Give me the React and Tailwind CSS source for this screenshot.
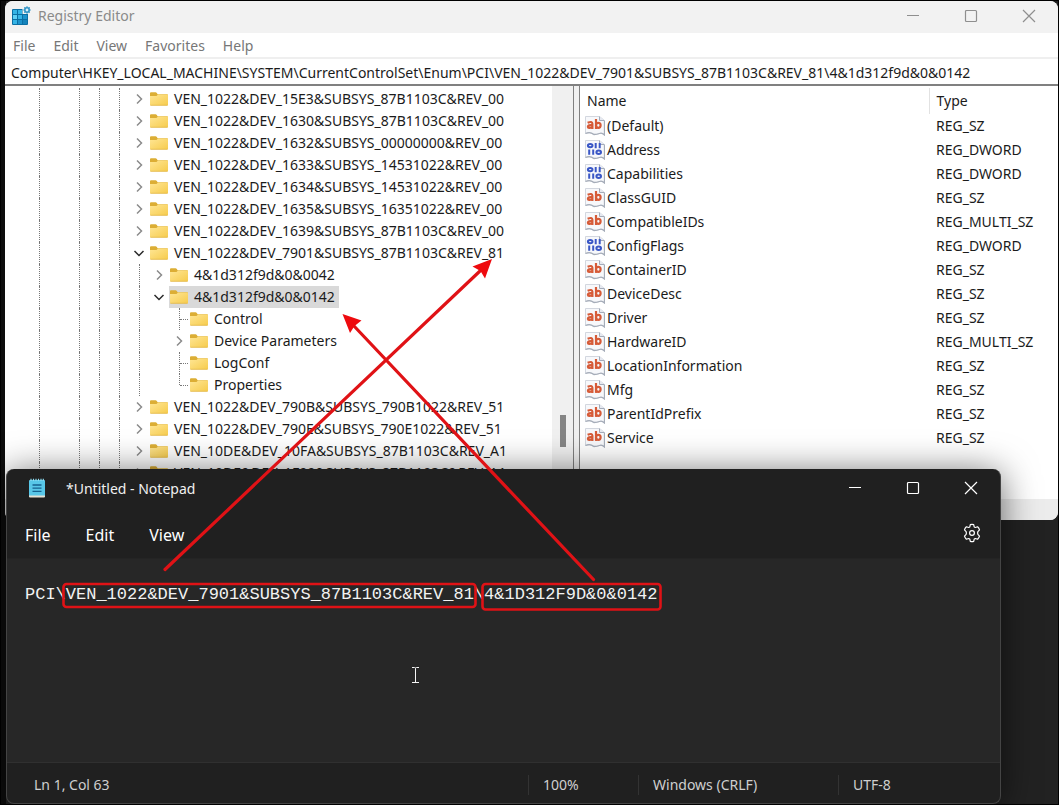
import React from "react";

const tree = [
  { level: 0, name: "VEN_1022&DEV_15E3&SUBSYS_87B1103C&REV_00", state: "closed" },
  { level: 0, name: "VEN_1022&DEV_1630&SUBSYS_87B1103C&REV_00", state: "closed" },
  { level: 0, name: "VEN_1022&DEV_1632&SUBSYS_00000000&REV_00", state: "closed" },
  { level: 0, name: "VEN_1022&DEV_1633&SUBSYS_14531022&REV_00", state: "closed" },
  { level: 0, name: "VEN_1022&DEV_1634&SUBSYS_14531022&REV_00", state: "closed" },
  { level: 0, name: "VEN_1022&DEV_1635&SUBSYS_16351022&REV_00", state: "closed" },
  { level: 0, name: "VEN_1022&DEV_1639&SUBSYS_87B1103C&REV_00", state: "closed" },
  { level: 0, name: "VEN_1022&DEV_7901&SUBSYS_87B1103C&REV_81", state: "open" },
  { level: 1, name: "4&1d312f9d&0&0042", state: "closed" },
  { level: 1, name: "4&1d312f9d&0&0142", state: "open", selected: true },
  { level: 2, name: "Control", state: "leaf" },
  { level: 2, name: "Device Parameters", state: "closed" },
  { level: 2, name: "LogConf", state: "leaf" },
  { level: 2, name: "Properties", state: "last" },
  { level: 0, name: "VEN_1022&DEV_790B&SUBSYS_790B1022&REV_51", state: "closed" },
  { level: 0, name: "VEN_1022&DEV_790E&SUBSYS_790E1022&REV_51", state: "closed" },
  { level: 0, name: "VEN_10DE&DEV_10FA&SUBSYS_87B1103C&REV_A1", state: "closed" },
  { level: 0, name: "VEN_10DE&DEV_1F99&SUBSYS_87B1103C&REV_A1", state: "closed" },
];

const values = [
  ["(Default)", "REG_SZ"],
  ["Address", "REG_DWORD"],
  ["Capabilities", "REG_DWORD"],
  ["ClassGUID", "REG_SZ"],
  ["CompatibleIDs", "REG_MULTI_SZ"],
  ["ConfigFlags", "REG_DWORD"],
  ["ContainerID", "REG_SZ"],
  ["DeviceDesc", "REG_SZ"],
  ["Driver", "REG_SZ"],
  ["HardwareID", "REG_MULTI_SZ"],
  ["LocationInformation", "REG_SZ"],
  ["Mfg", "REG_SZ"],
  ["ParentIdPrefix", "REG_SZ"],
  ["Service", "REG_SZ"],
];

function RegistryIcon() {
  return (
    <svg width="20" height="20" viewBox="0 0 20 20" aria-hidden="true">
      <rect x="1" y="3" width="16" height="16" rx="1" fill="#0b6fa4" />
      <g fill="#35b4e6">
        <rect x="2" y="4" width="4" height="4" />
        <rect x="7" y="4" width="4" height="4" />
        <rect x="2" y="9" width="4" height="4" fill="#5fd0f5" />
        <rect x="7" y="9" width="4" height="4" />
        <rect x="12" y="9" width="4" height="4" fill="#1e93cc" />
        <rect x="2" y="14" width="4" height="4" />
        <rect x="7" y="14" width="4" height="4" fill="#1e93cc" />
        <rect x="12" y="14" width="4" height="4" fill="#1583bb" />
      </g>
      <path d="M11.5 0H20V8H11.5Z" fill="#f2f2f2" />
      <circle cx="16" cy="4" r="2.2" fill="#d9f0fb" stroke="#2f93c4" strokeWidth="1.6" />
      <path d="M16 .2v1.4M16 6.4v1.4M12.2 4h1.4M18.4 4h1.4M13.3 1.3l1 1M17.7 5.7l1 1M18.7 1.3l-1 1M14.3 5.7l-1 1" stroke="#2f93c4" strokeWidth="1.2" />
    </svg>
  );
}

function Folder() {
  return (
    <svg className="shrink-0" width="18" height="14" viewBox="0 0 18 14" aria-hidden="true">
      <defs>
        <linearGradient id="folder" x1="0" y1="0" x2="1" y2="1">
          <stop offset="0" stopColor="#ffe694" />
          <stop offset="1" stopColor="#f6cb4c" />
        </linearGradient>
      </defs>
      <path d="M0 1.2Q0 .3 1 .3H5.6Q6.3 .3 6.8 1L7.6 2.2H17Q18 2.2 18 3V8H0Z" fill="#dcae35" />
      <path d="M0 4H6.5L8 2.6H17.2Q18 2.6 18 3.4V12.8Q18 13.6 17.2 13.6H.8Q0 13.6 0 12.8Z" fill="url(#folder)" />
      <path d="M.4 13.3H17.6" stroke="#dfb144" strokeWidth=".7" />
    </svg>
  );
}

function ValueIcon({ binary }) {
  return (
    <svg className="shrink-0" width="20" height="20" viewBox="0 0 20 20" aria-hidden="true">
      <path
        d="M.5 .5H14.5L19.5 4.5V19Q17 16.5 14.5 17.5T9 18.5Q5 15.5 .5 17.5Z"
        fill="#f7f8fb"
        stroke="#d3d7df"
      />
      <path d="M14.5 .5V4.5H19.5" fill="#e6e9f0" stroke="#a3abb9" />
      <path d="M19.5 5V19Q17 16.5 14.5 17.5T9 18.5Q5 15.5 .5 17.5" fill="none" stroke="#a6adb9" strokeWidth="1.3" />
      {binary ? (
        <g fill="none" stroke="#3a57c6" strokeWidth="2">
          <ellipse cx="5.2" cy="5.6" rx="2.3" ry="1.7" />
          <path d="M10.700 3V8.200M14.700 3V8.200" />
          <path d="M4.200 9.600V14.800M8.200 9.600V14.800" />
          <ellipse cx="13.700" cy="12.200" rx="2.300" ry="1.700" />
        </g>
      ) : (
        <g fill="none" stroke="#d65b38" strokeWidth="2.200">
          <path d="M2.600 6.800Q7.400 4.800 7.400 7.700V12.900M7.400 9.200Q2.900 8.800 2.900 10.800Q3.100 12.800 7.400 11.200" />
          <path d="M11 3V12.900" />
          <ellipse cx="13.300" cy="9.300" rx="2.300" ry="2.500" />
        </g>
      )}
    </svg>
  );
}

function Guide() {
  return (
    <span className="flex h-full w-5 shrink-0 justify-center">
      <span className="h-full border-l border-dotted border-[#777]" />
    </span>
  );
}

function Expander({ state, name }) {
  if (state === "leaf" || state === "last") {
    return (
      <span className="flex h-full w-5 shrink-0 pl-[10px]">
        <span className={`w-0 border-l border-dotted border-[#777] ${state === "last" ? "h-[11px]" : "h-full"}`} />
        <span className="mt-[11px] h-0 w-2 border-t border-dotted border-[#777]" />
      </span>
    );
  }
  return (
    <button
      type="button"
      aria-label={(state === "open" ? "Collapse " : "Expand ") + name}
      className="flex h-full w-5 shrink-0 items-center justify-center"
    >
      {state === "open" ? (
        <svg width="12" height="12" viewBox="0 0 12 12" fill="none" stroke="#2b2b2b" strokeWidth="1.5">
          <path d="M1.5 4L6 8.5L10.5 4" />
        </svg>
      ) : (
        <svg width="12" height="12" viewBox="0 0 12 12" fill="none" stroke="#8b8b8b" strokeWidth="1.5">
          <path d="M4 1.5L8.5 6L4 10.5" />
        </svg>
      )}
    </button>
  );
}

function TreeRow({ item }) {
  return (
    <li className="flex h-[22px] items-center pl-6">
      <Guide />
      <span className="w-5 shrink-0" />
      <Guide />
      <Guide />
      <Guide />
      {item.level > 0 && <Guide />}
      {item.level > 1 && <span className="w-5 shrink-0" />}
      <Expander state={item.state} name={item.name} />
      <span className={`flex h-full items-center gap-[6px] pr-1 pl-px whitespace-nowrap ${item.selected ? "bg-[#d9d9d9]" : ""}`}>
        <Folder />
        {item.name}
      </span>
    </li>
  );
}

function WindowButtons({ className }) {
  return (
    <div className={className}>
      <button type="button" aria-label="Minimize" className="flex w-[58px] justify-center">
        <svg width="14" height="14" viewBox="0 0 14 14" fill="none" stroke="currentColor" strokeWidth="1.2">
          <path d="M1 6.5H13" />
        </svg>
      </button>
      <button type="button" aria-label="Maximize" className="flex w-[58px] justify-center">
        <svg width="14" height="14" viewBox="0 0 14 14" fill="none" stroke="currentColor" strokeWidth="1.2">
          <rect x="1.5" y="1.5" width="11" height="11" rx="1" />
        </svg>
      </button>
      <button type="button" aria-label="Close" className="flex w-[58px] justify-center">
        <svg width="14" height="14" viewBox="0 0 14 14" fill="none" stroke="currentColor" strokeWidth="1.2">
          <path d="M1 1L13 13M13 1L1 13" />
        </svg>
      </button>
    </div>
  );
}

function RegistryEditor() {
  return (
    <section className="absolute top-px right-px left-[5px] overflow-hidden rounded-lg bg-white text-sm text-[#1b1b1b]">
      <header className="flex h-8 items-center bg-[#f2f2f2] pb-[3px] pl-[6px] text-[#8a8a8a]">
        <RegistryIcon />
        <h1 className="flex-1 pl-[7px]">Registry Editor</h1>
        <WindowButtons className="flex text-[#8f8f8f]" />
      </header>
      <nav className="flex h-6 items-center gap-[18px] pt-[2px] pl-2 text-[#777]">
        {["File", "Edit", "View", "Favorites", "Help"].map((m) => (
          <button type="button" key={m}>{m}</button>
        ))}
      </nav>
      <div className="border-y-2 border-t-[#efefef] border-b-[#808080]">
        <input
          aria-label="Address"
          defaultValue="Computer\HKEY_LOCAL_MACHINE\SYSTEM\CurrentControlSet\Enum\PCI\VEN_1022&DEV_7901&SUBSYS_87B1103C&REV_81\4&1d312f9d&0&0142"
          className="block h-[25px] w-full bg-white pt-px pl-[6px] outline-none"
        />
      </div>
      <div className="flex">
        <div className="flex w-[569px] shrink-0 border-r border-[#808080]">
          <ul className="min-w-0 flex-1 overflow-hidden pt-[2px] pb-[15px]">
            {tree.map((item) => (
              <TreeRow key={item.name} item={item} />
            ))}
          </ul>
          <div className="w-[21px] shrink-0 bg-[#f0f0f0] pt-[329px]">
            <div className="mx-auto h-8 w-[6px] bg-[#858585]" />
          </div>
        </div>
        <div className="w-[5px] shrink-0 bg-[#f0f0f0]" />
        <div className="min-w-0 flex-1 border-l border-[#808080] pt-[2px]">
          <table className="w-full table-fixed border-collapse text-left">
            <thead>
              <tr className="h-[26px]">
                <th className="w-[349px] border-r border-[#e2e2e2] pl-[7px] font-normal">Name</th>
                <th className="pl-[7px] font-normal">Type</th>
              </tr>
            </thead>
            <tbody>
              {values.map(([name, type]) => (
                <tr key={name} className="h-6">
                  <td className="p-0 pl-[5px]">
                    <span className="flex items-center gap-[2px]">
                      <ValueIcon binary={type === "REG_DWORD"} />
                      {name}
                    </span>
                  </td>
                  <td className="p-0 pl-[7px]">{type}</td>
                </tr>
              ))}
            </tbody>
          </table>
        </div>
      </div>
      <footer className="h-[21px] bg-[#ececec]" />
    </section>
  );
}

function Gear() {
  return (
    <svg width="20" height="20" viewBox="0 0 20 20" fill="none" stroke="currentColor" strokeWidth="1.2" strokeLinejoin="round">
      <path d="M8.3 1.6Q10 1.1 11.7 1.6L12.2 3.9Q12.6 4.4 13.4 4.5L15.6 3.8Q17 5 17.5 6.8L15.9 8.6Q15.3 10 15.9 11.4L17.5 13.2Q17 15 15.6 16.2L13.4 15.5Q12.6 15.6 12.2 16.1L11.7 18.4Q10 18.9 8.3 18.4L7.8 16.1Q7.4 15.6 6.6 15.5L4.4 16.2Q3 15 2.5 13.2L4.1 11.4Q4.7 10 4.1 8.6L2.5 6.8Q3 5 4.4 3.8L6.6 4.5Q7.4 4.4 7.8 3.9Z" />
      <circle cx="10" cy="10" r="2.4" />
    </svg>
  );
}

function Notepad() {
  return (
    <section className="absolute top-[469px] right-[58px] bottom-px left-[6px] flex flex-col overflow-hidden rounded-lg border border-t-0 border-[#444] bg-[#202020] text-sm text-white shadow-[0_4px_36px_rgba(0,0,0,0.6)]">
      <header className="flex h-9 shrink-0 items-center pt-[2px] pl-[21px]">
        <svg width="18" height="20" viewBox="0 0 18 20" aria-hidden="true">
          <rect x="1" y="2" width="16" height="17" rx="1" fill="#58c7e8" />
          <path d="M1 17.4H17V18.4Q17 19.4 16 19.4H2Q1 19.4 1 18.4Z" fill="#e4e1d3" />
          <path d="M3 .8V3M5.500 .8V3M8 .8V3M10.500 .8V3M13 .8V3M15.300 .8V3" stroke="#8edcf2" strokeWidth="1.2" />
          <path d="M4.500 7H13.500M4.500 10.200H13.500M4.500 13.400H13.500" stroke="#14628f" strokeWidth="1.3" />
        </svg>
        <h2 className="flex-1 pt-px pl-5 text-[#f0f0f0]">*Untitled - Notepad</h2>
        <WindowButtons className="flex" />
      </header>
      <nav className="flex h-[53px] shrink-0 items-center gap-[35px] pt-[6px] pr-[18px] pl-[18px] text-base">
        <button type="button">File</button>
        <button type="button">Edit</button>
        <button type="button">View</button>
        <button type="button" aria-label="Settings" className="ml-auto pb-1">
          <Gear />
        </button>
      </nav>
      <textarea
        aria-label="Document text"
        spellCheck={false}
        defaultValue={"PCI\\VEN_1022&DEV_7901&SUBSYS_87B1103C&REV_81\\4&1D312F9D&0&0142"}
        className="block min-h-0 w-full flex-1 resize-none border-y border-t-[#242424] border-b-[#303030] bg-[#272727] pt-6 pl-[18px] font-['Liberation_Mono',monospace] text-[17px] leading-6 text-[#f2f2f2] outline-none"
      />
      <footer className="flex h-10 shrink-0 items-center pt-1 text-[#cfcfcf]">
        <span className="flex-1 pl-[27px]">Ln 1, Col 63</span>
        <span className="w-[110px] border-l border-[#333] pl-[14px]">100%</span>
        <span className="w-[200px] border-l border-[#333] pl-[14px]">Windows (CRLF)</span>
        <span className="w-[162px] border-l border-[#333] pl-[14px]">UTF-8</span>
      </footer>
    </section>
  );
}

function Annotations() {
  return (
    <svg className="pointer-events-none absolute top-0 left-0" width="700" height="720" viewBox="0 0 700 720" fill="none" aria-hidden="true">
      <g stroke="#e01216" strokeWidth="3.200" strokeLinecap="round">
        <path d="M165 569.500L480 271M593.500 579.500L354 326" />
      </g>
      <g fill="#ee0a0e">
        <path d="M492 259L485 278.500L480.500 271L472.500 266.500Z" />
        <path d="M342.500 314L361.500 320.500L354.500 326L350 333Z" />
      </g>
      <g stroke="#e01216" strokeWidth="2.600">
        <rect x="63.500" y="584" width="412" height="23" rx="3" />
        <rect x="482.500" y="584" width="178" height="25.500" rx="3" />
      </g>
      <path d="M412 667.500H414.500Q415.500 667.500 415.500 668.500V682.500M419 667.500H416.500Q415.500 667.500 415.500 668.500M412 682.500H419" stroke="#f5f5f5" />
    </svg>
  );
}

export default function App() {
  return (
    <main className="relative min-h-screen overflow-hidden bg-[#222] font-['Noto_Sans','Open_Sans',sans-serif]">
      <div className="absolute inset-y-0 left-0 w-[6px] bg-[#0d0d0d]" />
      <div className="absolute inset-0 border border-black" />
      <RegistryEditor />
      <Notepad />
      <Annotations />
    </main>
  );
}
